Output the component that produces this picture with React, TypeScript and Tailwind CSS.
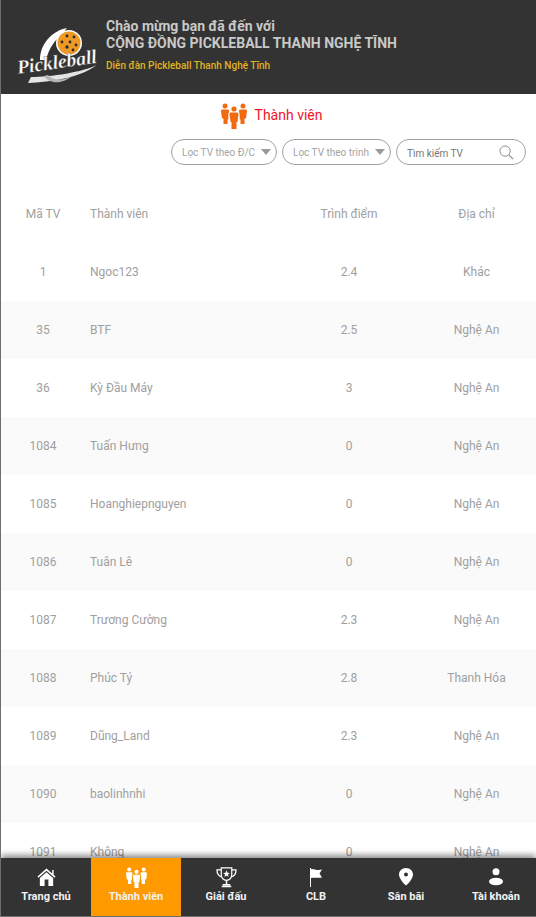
import React from "react";

const members = [
  { id: "1", name: "Ngoc123", score: "2.4", place: "Khác" },
  { id: "35", name: "BTF", score: "2.5", place: "Nghệ An" },
  { id: "36", name: "Kỳ Đầu Máy", score: "3", place: "Nghệ An" },
  { id: "1084", name: "Tuấn Hưng", score: "0", place: "Nghệ An" },
  { id: "1085", name: "Hoanghiepnguyen", score: "0", place: "Nghệ An" },
  { id: "1086", name: "Tuân Lê", score: "0", place: "Nghệ An" },
  { id: "1087", name: "Trương Cường", score: "2.3", place: "Nghệ An" },
  { id: "1088", name: "Phúc Tý", score: "2.8", place: "Thanh Hóa" },
  { id: "1089", name: "Dũng_Land", score: "2.3", place: "Nghệ An" },
  { id: "1090", name: "baolinhnhi", score: "0", place: "Nghệ An" },
  { id: "1091", name: "Không", score: "0", place: "Nghệ An" },
];

function Logo() {
  return (
    <svg viewBox="0 0 105 75" className="h-[75px] w-[105px] shrink-0">
      {/* swoosh behind the ball */}
      <path d="M39 50C39 35 50 21 66 18L61 24C54 30 48 38 45 50Z" fill="#fff" />
      <circle cx="68" cy="33" r="13" fill="#fff" />
      <circle cx="68" cy="33" r="11.500" fill="#ee9a25" />
      <g fill="#2b2b2b">
        <circle cx="66" cy="26" r="1.400" />
        <circle cx="73" cy="27" r="1.400" />
        <circle cx="61" cy="32" r="1.400" />
        <circle cx="69" cy="32" r="1.400" />
        <circle cx="75" cy="35" r="1.400" />
        <circle cx="66" cy="37" r="1.700" />
        <circle cx="72" cy="40" r="1.400" />
      </g>
      <path d="M27 73C50 72 78 68 96 55C82 62 50 67 30 67Z" fill="#e4e4e4" />
      <path d="M43 66C48 74 62 75 72 65C64 71 52 71 47 65Z" fill="#b5b5b5" />
      <g transform="rotate(-8 17 64)">
        <text
          x="17"
          y="64"
          fill="#fff"
          stroke="#333"
          strokeWidth="0.3"
          className="font-['Liberation_Serif',serif] text-[19.5px] font-bold italic"
        >
          Pickleball
        </text>
      </g>
    </svg>
  );
}

function PeopleIcon({ className }: { className: string }) {
  return (
    <svg viewBox="0 0 26 26" className={className} fill="currentColor">
      <circle cx="4" cy="3" r="2.500" />
      <circle cx="22" cy="3" r="2.500" />
      <circle cx="13" cy="6" r="2.600" />
      <path d="M1.500 6.500H6.500C7.500 6.500 8 7.200 8 8V9.500C8 9.500 7.300 10 7.300 11V16.500H6.500V21H2.500V15.500H1L0 8C0 7.200 .6 6.500 1.500 6.500Z" />
      <path d="M19.500 6.500H24.500C25.400 6.500 26 7.200 26 8L25 15.500H23.500V21H19.500V16.500H18.700V11C18.700 10 18 9.500 18 9.500V8C18 7.200 18.500 6.500 19.500 6.500Z" />
      <path d="M10 9.500H16C16.900 9.500 17.500 10.200 17.500 11L16.500 19H15.500V26H10.500V19H9.500L8.500 11C8.500 10.200 9.100 9.500 10 9.500Z" />
    </svg>
  );
}

function HomeIcon() {
  return (
    <svg viewBox="0 0 20 20" className="h-[19px] w-[19px]" fill="#fff">
      <path d="M10 0.500L0.500 9L1.500 10.200L10 2.800L18.500 10.200L19.500 9L17.500 7.200V2H16V5.800Z" />
      <path fillRule="evenodd" d="M10 4.500L3 10.500V19H17V10.500ZM8 12H12V19H8Z" />
    </svg>
  );
}

function TrophyIcon() {
  return (
    <svg viewBox="0 0 22 22" className="h-[21px] w-[21px]" fill="none" stroke="#fff" strokeWidth="1.300">
      <path d="M5.500 1H16.500V8C16.500 11.500 14 14 11 14C8 14 5.500 11.500 5.500 8Z" />
      <path d="M5.500 3H1C1 7 2.500 9.500 6 10.500M16.500 3H21C21 7 19.500 9.500 16 10.500" />
      <path d="M11 14V18M7 18.500H15M6 20.500H16" strokeWidth="1.500" />
      <path d="M11 3.500L12 6.100L14.600 6.200L12.500 7.900L13.200 10.500L11 9L8.800 10.500L9.500 7.900L7.400 6.200L10 6.100Z" fill="#fff" stroke="none" />
    </svg>
  );
}

function FlagIcon() {
  return (
    <svg viewBox="0 0 14 19" className="h-[19px] w-[14px]" fill="#fff">
      <path d="M1 0H2V19H1Z" />
      <path d="M2 1C5 0.500 8 3 13 1.500L10.500 5.500L13 9.500C8 10.500 5 9 2 10Z" />
    </svg>
  );
}

function PinIcon() {
  return (
    <svg viewBox="0 0 14 18" className="h-[18px] w-[14px]" fill="#fff">
      <path
        fillRule="evenodd"
        d="M7 0C3.100 0 0 2.900 0 6.500C0 10.500 5 16 7 17.500C9 16 14 10.500 14 6.500C14 2.900 10.900 0 7 0ZM7 4.500A2 2 0 1 1 7 8.500A2 2 0 1 1 7 4.500Z"
      />
    </svg>
  );
}

function UserIcon() {
  return (
    <svg viewBox="0 0 16 18" className="h-[18px] w-4" fill="#fff">
      <circle cx="8" cy="3.800" r="3.500" />
      <ellipse cx="8" cy="13.500" rx="7" ry="3.800" />
    </svg>
  );
}

const tabs = [
  { label: "Trang chủ", icon: <HomeIcon /> },
  { label: "Thành viên", icon: <PeopleIcon className="h-[21px] w-[21px] text-white" />, active: true },
  { label: "Giải đấu", icon: <TrophyIcon /> },
  { label: "CLB", icon: <FlagIcon /> },
  { label: "Sân bãi", icon: <PinIcon /> },
  { label: "Tài khoản", icon: <UserIcon /> },
];

function FilterSelect({ label, width }: { label: string; width: string }) {
  return (
    <div className={`flex h-[26px] items-center justify-between rounded-full border border-[#a0a0a0] pl-[10px] pr-[5px] ${width}`}>
      <span className="text-[10px] text-[#a3a3a3]">{label}</span>
      <span className="h-0 w-0 border-x-[5px] border-t-[6px] border-x-transparent border-t-[#9a9a9a]" />
    </div>
  );
}

export default function App() {
  return (
    <div className="flex h-screen flex-col overflow-hidden border-l border-[#6f6f6f] bg-white font-['Roboto',sans-serif]">
      <header className="flex h-[94px] shrink-0 items-center bg-[#333333]">
        <Logo />
        <div className="mt-[-4px]">
          <p className="text-[14px] leading-[17px] font-bold text-[#c8c8c8]">Chào mừng bạn đã đến với</p>
          <p className="text-[14px] leading-[17px] font-bold text-[#c8c8c8]">CỘNG ĐỒNG PICKLEBALL THANH NGHỆ TĨNH</p>
          <p className="mt-[7px] text-[10px] leading-[13px] font-medium text-[#e0b420]">Diễn đàn Pickleball Thanh Nghệ Tĩnh</p>
        </div>
      </header>

      <main className="min-h-0 flex-1 overflow-hidden">
        <div className="flex h-[43px] items-center justify-center gap-[8px] pl-[6px]">
          <PeopleIcon className="h-[26px] w-[26px] text-[#f26a0f]" />
          <span className="text-[14px] text-[#f0141e]">Thành viên</span>
        </div>
        <div className="mt-[2px] flex justify-end gap-[5px] pr-[10px]">
          <FilterSelect label="Lọc TV theo Đ/C" width="w-[106px]" />
          <FilterSelect label="Lọc TV theo trình" width="w-[109px]" />
          <div className="flex h-[26px] w-[130px] items-center justify-between rounded-full border border-[#a0a0a0] pl-[10px] pr-[11px]">
            <span className="mt-[3px] text-[10px] text-[#757575]">Tìm kiếm TV</span>
            <svg viewBox="0 0 16 16" className="h-[15px] w-[15px]" fill="none" stroke="#8a8a8a" strokeWidth="1">
              <circle cx="6.500" cy="6.500" r="5.500" />
              <path d="M10.500 10.500L15 15" strokeWidth="1.300" />
            </svg>
          </div>
        </div>

        <div className="mt-[20px] text-[12px] text-[#a0a0a0]">
          <div className="grid h-[58px] grid-cols-[84px_196px_136px_119px] items-center">
            <span className="text-center">Mã TV</span>
            <span className="pl-[5px]">Thành viên</span>
            <span className="text-center">Trình điểm</span>
            <span className="text-center">Địa chỉ</span>
          </div>
          {members.map((m, i) => (
            <div
              key={m.id}
              className={`grid h-[58px] grid-cols-[84px_196px_136px_119px] items-center ${i % 2 === 1 ? "bg-[#fafafa]" : ""}`}
            >
              <span className="text-center">{m.id}</span>
              <span className="pl-[5px]">{m.name}</span>
              <span className="text-center">{m.score}</span>
              <span className="text-center">{m.place}</span>
            </div>
          ))}
        </div>
      </main>

      <nav className="z-10 flex h-[59px] shrink-0 overflow-hidden border-b border-[#6f6f6f] bg-[#333333] shadow-[0_-3px_6px_rgba(0,0,0,0.45)]">
        {tabs.map((t) => (
          <div
            key={t.label}
            className={`flex h-full w-[90px] shrink-0 flex-col items-center pt-[8px] ${t.active ? "bg-[#ff9900]" : ""}`}
          >
            <div className="flex h-[22px] items-center">{t.icon}</div>
            <span className="mt-[2px] text-[11px] leading-[14px] font-bold text-[#f2f2f2]">{t.label}</span>
          </div>
        ))}
      </nav>
    </div>
  );
}
